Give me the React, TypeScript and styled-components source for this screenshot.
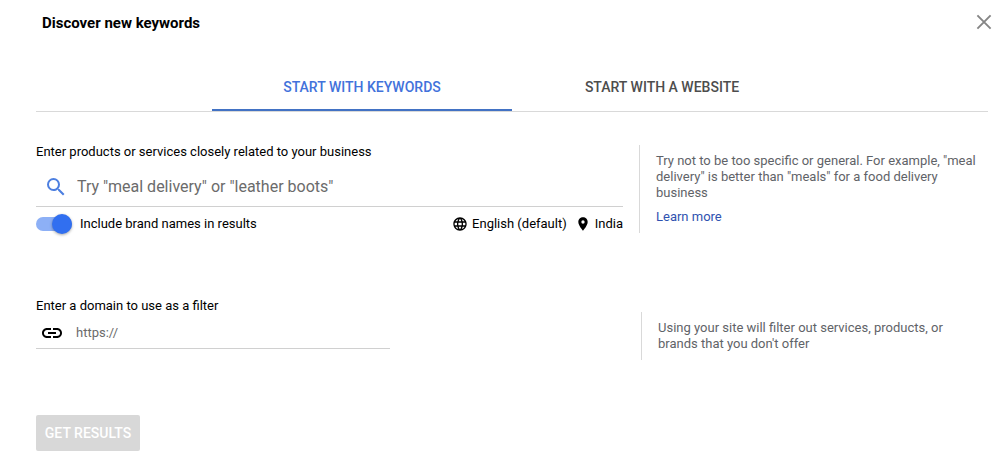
import React, { useState } from "react";
import styled, { createGlobalStyle } from "styled-components";
import { MdLanguage, MdLink, MdPlace, MdSearch } from "react-icons/md";

const GlobalStyle = createGlobalStyle`
  *, *::before, *::after { box-sizing: border-box; }
  body {
    margin: 0;
    background: #fff;
    color: #0b0b0b;
    font-family: Roboto, Arial, sans-serif;
    font-size: 13px;
    line-height: 20px;
  }
`;

const Page = styled.main`
  padding: 0 17px 8px 36px;
`;

const Header = styled.header`
  display: flex;
  justify-content: space-between;
  align-items: flex-start;
  height: 64px;
  padding: 12px 0 0 6px;
`;

const Title = styled.h1`
  margin: 0;
  font-size: 15px;
  font-weight: 700;
  line-height: 22px;
  color: #000;
`;

const CloseButton = styled.button`
  display: flex;
  margin-right: -6px;
  padding: 0;
  border: 0;
  background: none;
  color: #858585;
  cursor: pointer;
`;

const Tabs = styled.div`
  display: flex;
  justify-content: center;
  border-bottom: 1px solid #d9d9d9;
`;

const Tab = styled.button<{ $active: boolean }>`
  width: 300px;
  height: 47px;
  padding: 0;
  border: 0;
  border-bottom: 2px solid ${(p) => (p.$active ? "#4272c4" : "transparent")};
  background: none;
  color: ${(p) => (p.$active ? "#4272db" : "#4d4d4d")};
  font: 500 14px/20px Roboto, Arial, sans-serif;
  text-transform: uppercase;
  cursor: pointer;
`;

const Section = styled.section<{ $aside: number }>`
  display: grid;
  grid-template-columns: minmax(0, 1fr) ${(p) => p.$aside}px;
  column-gap: 16px;
`;

const KeywordSection = styled(Section)`
  margin-top: 30px;
`;

const DomainSection = styled(Section)`
  margin-top: 55px;
`;

const Label = styled.label`
  display: block;
  color: #000;
`;

const Field = styled.div<{ $height: number; $inset: number; $gap: number }>`
  display: flex;
  align-items: center;
  gap: ${(p) => p.$gap}px;
  height: ${(p) => p.$height}px;
  padding-left: ${(p) => p.$inset}px;
  border-bottom: 1px solid #d0d0d0;
`;

const KeywordField = styled(Field)`
  margin-top: 5px;
  color: #4d7fe0;
`;

const DomainField = styled(Field)`
  max-width: 354px;
  margin-top: 1px;
  color: #000;
`;

const TextInput = styled.input<{ $size: number }>`
  flex: 1;
  min-width: 0;
  padding: 0;
  border: 0;
  outline: 0;
  background: none;
  color: #202124;
  font: 400 ${(p) => p.$size}px/24px Roboto, Arial, sans-serif;
  &::placeholder {
    color: #6b6b6b;
    opacity: 1;
  }
`;

const Options = styled.div`
  display: flex;
  align-items: center;
  justify-content: space-between;
  height: 34px;
  color: #000;
`;

const SwitchLabel = styled.label`
  display: flex;
  align-items: center;
  gap: 8px;
  cursor: pointer;
`;

const Switch = styled.input`
  appearance: none;
  display: flex;
  align-items: center;
  width: 36px;
  height: 14px;
  margin: 0;
  border-radius: 7px;
  background: #bdbdbd;
  cursor: pointer;
  &::before {
    content: "";
    width: 20px;
    height: 20px;
    border-radius: 50%;
    background: #fafafa;
    box-shadow: 0 1px 3px rgba(0, 0, 0, 0.35);
  }
  &:checked {
    justify-content: flex-end;
    background: #8db0f6;
  }
  &:checked::before {
    background: #316ff0;
  }
`;

const Targeting = styled.div`
  display: flex;
  gap: 8px;
`;

const TargetButton = styled.button`
  display: flex;
  align-items: center;
  gap: 4px;
  padding: 0;
  border: 0;
  background: none;
  color: #000;
  font: 400 13px/20px Roboto, Arial, sans-serif;
  cursor: pointer;
`;

const Hint = styled.aside<{ $offset: number }>`
  align-self: start;
  margin-top: ${(p) => p.$offset}px;
  padding: 8px 8px 8px 16px;
  border-left: 1px solid #d9d9d9;
  color: #5f6368;
  font-size: 13px;
  line-height: 16px;
`;

const HintText = styled.p`
  margin: 0;
`;

const HintLink = styled.a`
  display: block;
  margin-top: 8px;
  color: #2f52b0;
  text-decoration: none;
`;

const SubmitButton = styled.button`
  display: block;
  min-width: 104px;
  height: 36px;
  margin-top: 55px;
  padding: 0 8px;
  border: 0;
  border-radius: 2px;
  background: #d8d8d8;
  color: #fff;
  font: 500 14px/20px Roboto, Arial, sans-serif;
  text-transform: uppercase;
`;

const TABS = ["Start with keywords", "Start with a website"];

export default function App() {
  const [activeTab, setActiveTab] = useState(0);
  const [includeBrands, setIncludeBrands] = useState(true);

  return (
    <>
      <GlobalStyle />
      <Page>
        <Header>
          <Title>Discover new keywords</Title>
          <CloseButton type="button" aria-label="Close">
            <svg width="20" height="20" viewBox="0 0 20 20" fill="none" stroke="currentColor" strokeWidth="1.9">
              <path d="M3.4 3.4 16.6 16.6M16.6 3.4 3.4 16.6" />
            </svg>
          </CloseButton>
        </Header>

        <Tabs role="tablist">
          {TABS.map((name, index) => (
            <Tab
              key={name}
              type="button"
              role="tab"
              aria-selected={index === activeTab}
              $active={index === activeTab}
              onClick={() => setActiveTab(index)}
            >
              {name}
            </Tab>
          ))}
        </Tabs>

        <KeywordSection $aside={349}>
          <div>
            <Label htmlFor="keywords">Enter products or services closely related to your business</Label>
            <KeywordField $height={40} $inset={8} $gap={9}>
              <MdSearch size={24} />
              <TextInput id="keywords" $size={16} placeholder={'Try "meal delivery" or "leather boots"'} />
            </KeywordField>
            <Options>
              <SwitchLabel>
                <Switch
                  type="checkbox"
                  role="switch"
                  checked={includeBrands}
                  onChange={(e) => setIncludeBrands(e.target.checked)}
                />
                Include brand names in results
              </SwitchLabel>
              <Targeting>
                <TargetButton type="button">
                  <MdLanguage size={16} />
                  English (default)
                </TargetButton>
                <TargetButton type="button">
                  <MdPlace size={16} />
                  India
                </TargetButton>
              </Targeting>
            </Options>
          </div>
          <Hint $offset={3}>
            <HintText>
              Try not to be too specific or general. For example, "meal delivery" is better than "meals" for a food
              delivery business
            </HintText>
            <HintLink href="#">Learn more</HintLink>
          </Hint>
        </KeywordSection>

        <DomainSection $aside={347}>
          <div>
            <Label htmlFor="domain">Enter a domain to use as a filter</Label>
            <DomainField $height={32} $inset={4} $gap={12}>
              <MdLink size={24} />
              <TextInput id="domain" $size={13} placeholder="https://" />
            </DomainField>
          </div>
          <Hint $offset={16}>
            <HintText>Using your site will filter out services, products, or brands that you don't offer</HintText>
          </Hint>
        </DomainSection>

        <SubmitButton type="button" disabled>
          Get results
        </SubmitButton>
      </Page>
    </>
  );
}
